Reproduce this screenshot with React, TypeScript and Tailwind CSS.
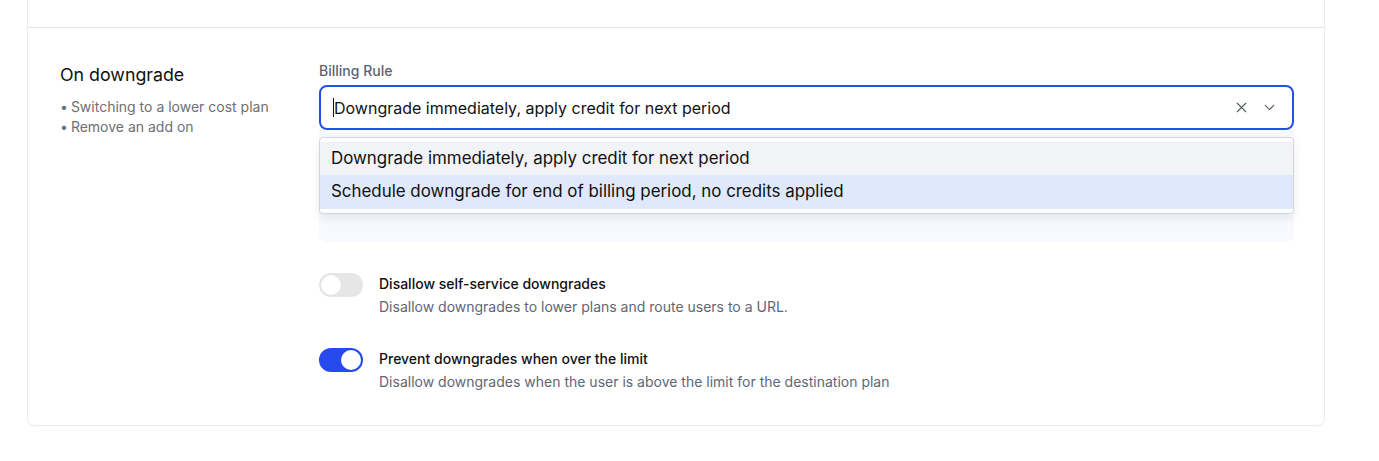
import { ChevronDown, X } from "lucide-react"

type ToggleRowProps = {
  on: boolean
  title: string
  description: string
}

function Toggle({ on }: { on: boolean }) {
  return (
    <span
      className={`flex h-[24px] w-[44px] shrink-0 items-center rounded-full p-[2px] ${
        on ? "justify-end bg-[#2649ee]" : "justify-start bg-[#e6e6e6]"
      }`}
    >
      <span
        className={`h-[20px] w-[20px] rounded-full bg-white ${
          on ? "ring-1 ring-[#2649ee]" : "ring-1 ring-[#e2e2e2]"
        }`}
      />
    </span>
  )
}

function ToggleRow({ on, title, description }: ToggleRowProps) {
  return (
    <div className="flex gap-4">
      <Toggle on={on} />
      <div>
        <p className="mt-px text-[14px] font-medium leading-[20px] text-[#111111]">{title}</p>
        <p className="mt-[3px] text-[14px] leading-[20px] text-[#5f6675]">{description}</p>
      </div>
    </div>
  )
}

export default function App() {
  const options = [
    "Downgrade immediately, apply credit for next period",
    "Schedule downgrade for end of billing period, no credits applied",
  ]

  return (
    <div
      className="min-h-[461px] bg-white"
      style={{ fontFamily: "Inter, 'Noto Sans', sans-serif" }}
    >
      <div className="pl-[27px] pr-[54px]">
        <div className="rounded-b-lg border-x border-b border-[#ececec] bg-white shadow-[0_1px_2px_rgba(0,0,0,0.03)]">
          <div className="h-[28px] border-b border-[#e6e6e6]" />

          <div className="flex pb-[33px] pl-[32px] pr-[30px] pt-[35px]">
            <div className="w-[259px] shrink-0">
              <h3 className="text-[17.8px] font-normal leading-[24px] text-[#111111]">On downgrade</h3>
              <ul className="mt-[10px] text-[14px] leading-[20px] text-[#6b6f76]">
                <li className="flex gap-[3px]">
                  <span>•</span>
                  <span>Switching to a lower cost plan</span>
                </li>
                <li className="flex gap-[3px]">
                  <span>•</span>
                  <span>Remove an add on</span>
                </li>
              </ul>
            </div>

            <div className="flex-1">
              <label className="block text-[14px] font-medium leading-[16px] text-[#5a6274]">Billing Rule</label>

              <div className="mt-[6px] flex h-[45px] items-center rounded-lg border-2 border-[#2350ec] bg-white pl-[12px] pr-[14px]">
                <span className="h-[19px] w-px bg-[#111111]" />
                <span className="flex-1 text-[16px] leading-[20px] text-[#111111]">{options[0]}</span>
                <X size={17} strokeWidth={1.6} className="text-[#555a63]" />
                <ChevronDown size={17} strokeWidth={1.6} className="ml-[11px] text-[#555a63]" />
              </div>

              <div className="relative h-[112px] rounded-b-lg bg-[#f8f9fe]">
                <div className="absolute left-0 right-0 top-[7px] rounded-[4px] border border-[#d4d5da] bg-white py-[4px] shadow-[0_4px_10px_rgba(0,0,0,0.08)]">
                  <div className="flex h-[33px] items-center bg-[#f2f3f6] px-[11px] text-[16.9px] text-[#111111]">
                    {options[0]}
                  </div>
                  <div className="flex h-[34px] items-center bg-[#e0e9fb] px-[11px] text-[16.9px] text-[#111111]">
                    {options[1]}
                  </div>
                </div>
              </div>

              <div className="mt-[31px] flex flex-col gap-[31px]">
                <ToggleRow
                  on={false}
                  title="Disallow self-service downgrades"
                  description="Disallow downgrades to lower plans and route users to a URL."
                />
                <ToggleRow
                  on={true}
                  title="Prevent downgrades when over the limit"
                  description="Disallow downgrades when the user is above the limit for the destination plan"
                />
              </div>
            </div>
          </div>
        </div>
      </div>
    </div>
  )
}
